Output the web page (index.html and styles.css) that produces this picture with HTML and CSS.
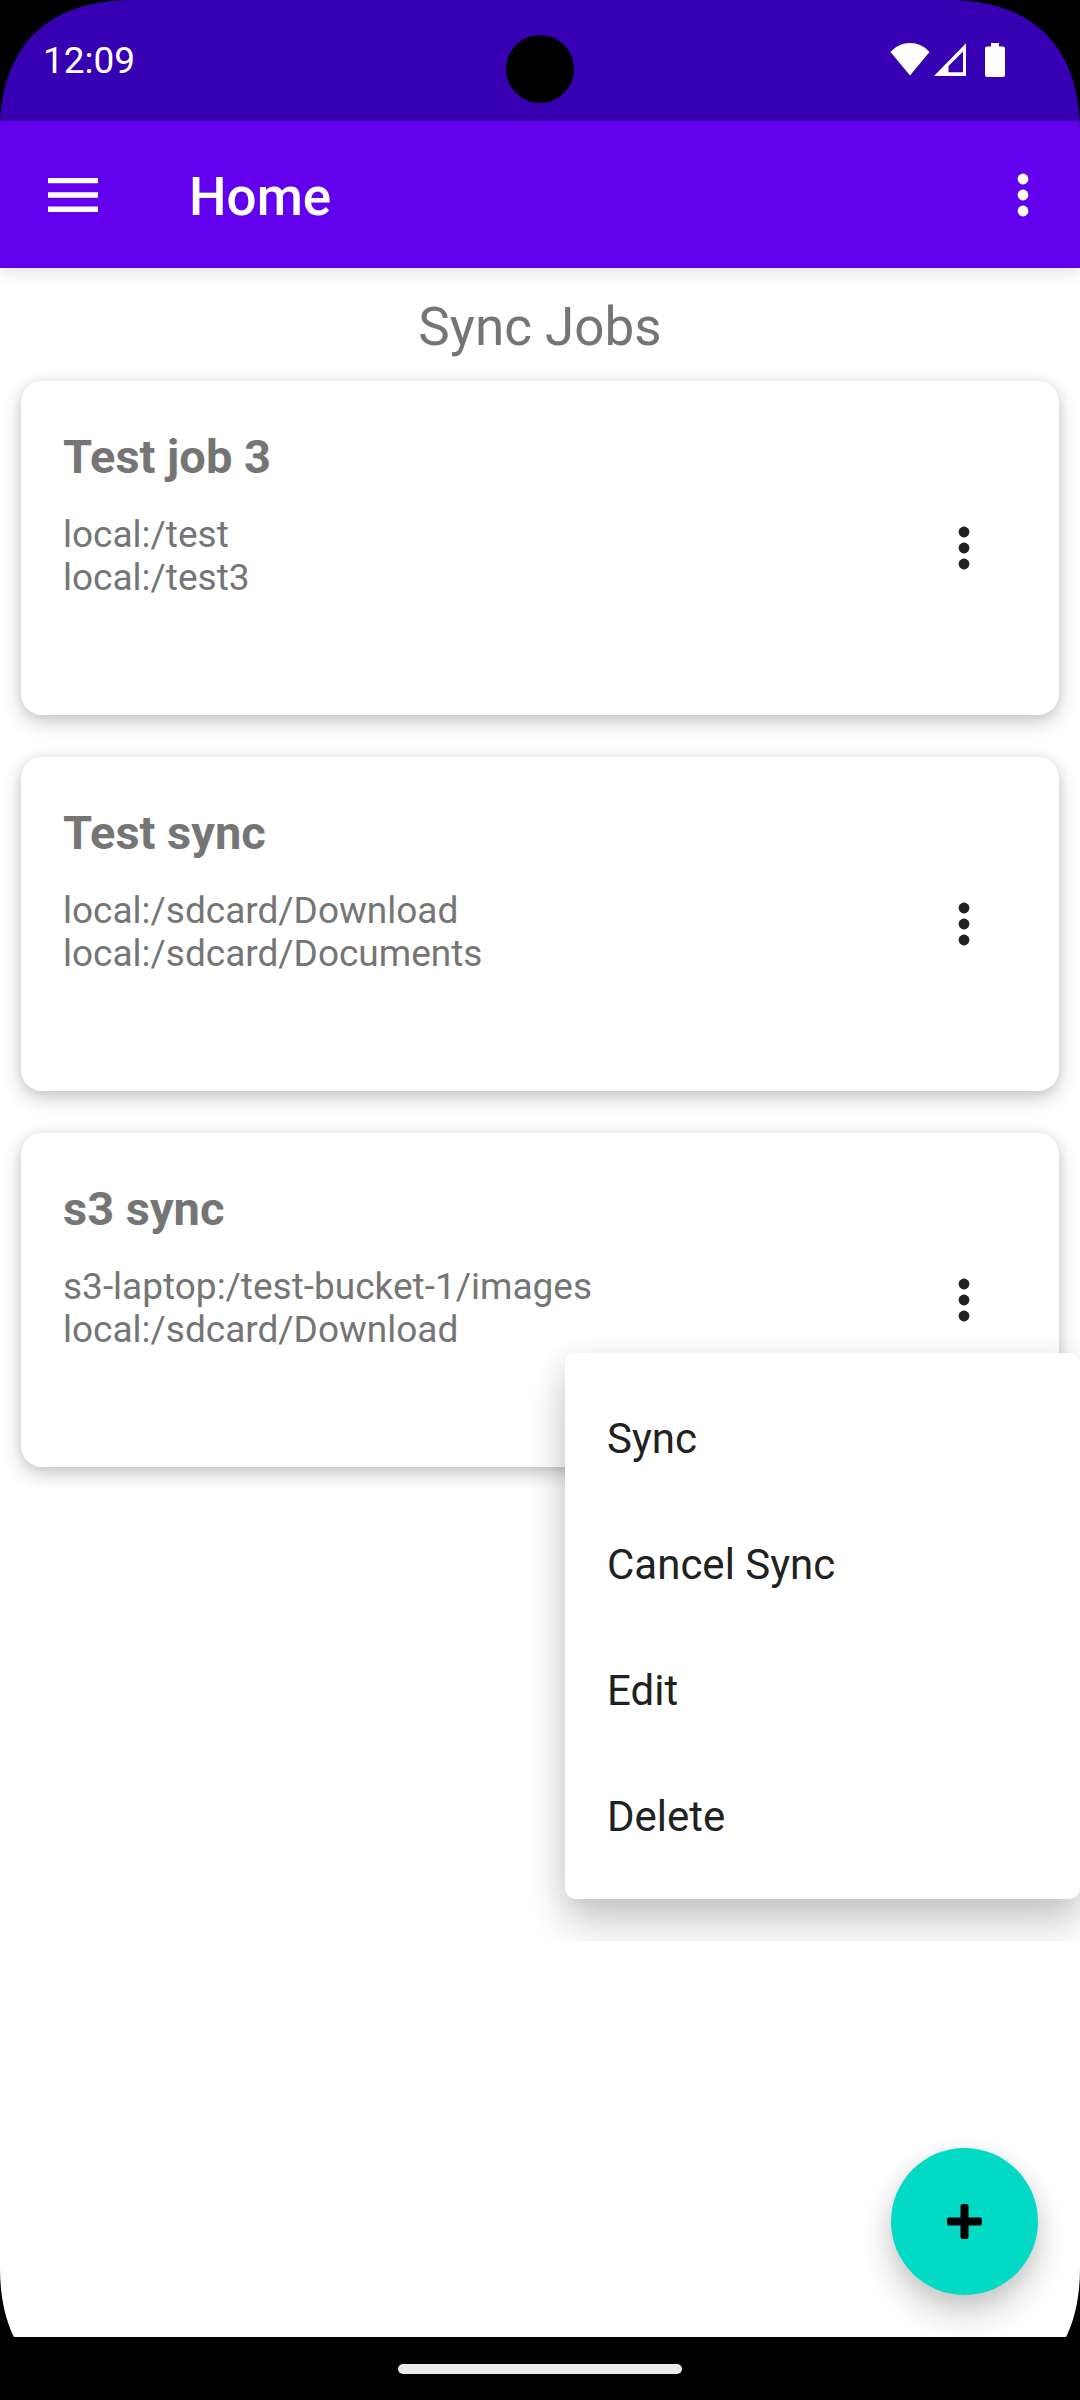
FILE: index.html
```html
<!DOCTYPE html>
<html lang="en">
<head>
<meta charset="utf-8">
<meta name="viewport" content="width=device-width">
<title>Home</title>
<link rel="stylesheet" href="styles.css">
</head>
<body>
<svg width="0" height="0" hidden>
  <symbol id="dots" viewBox="0 0 12 44"><circle cx="6" cy="6" r="5.4"/><circle cx="6" cy="22" r="5.4"/><circle cx="6" cy="38" r="5.4"/></symbol>
  <symbol id="corner" viewBox="0 0 132 132"><path d="M0 0H132C47 0 0 47 0 132Z"/></symbol>
</svg>
<div class="status">
  <span>12:09</span>
  <div class="status-icons">
    <svg width="40" height="34" viewBox="0 0 40 34"><path d="M20 32.500L.5 9C6 3 12.500 0 20 0S34 3 39.500 9Z"/></svg>
    <svg width="32" height="34" viewBox="0 0 32 34"><path fill-rule="evenodd" d="M32 .2V33H0ZM29 8.500L14.500 23V29.300H29Z"/></svg>
    <svg class="battery" width="20" height="34" viewBox="0 0 20 34"><path d="M6 0H14V3.500H18Q20 3.500 20 5.500V32Q20 34 18 34H2Q0 34 0 32V5.500Q0 3.500 2 3.500H6Z"/></svg>
  </div>
</div>
<header class="appbar">
  <button class="icon-button" aria-label="Open navigation"><svg width="50" height="34" viewBox="0 0 50 34"><path d="M0 0H50V5.300H0ZM0 14.300H50V19.700H0ZM0 28.500H50V34H0Z"/></svg></button>
  <h1>Home</h1>
  <button class="icon-button" aria-label="More options"><svg width="12" height="44"><use href="#dots"/></svg></button>
</header>
<main>
  <h2>Sync Jobs</h2>
  <ul class="jobs">
    <li class="job">
      <div><h3>Test job 3</h3><p>local:/test</p><p>local:/test3</p></div>
      <button class="icon-button" aria-label="Options for Test job 3"><svg width="12" height="44"><use href="#dots"/></svg></button>
    </li>
    <li class="job">
      <div><h3>Test sync</h3><p>local:/sdcard/Download</p><p>local:/sdcard/Documents</p></div>
      <button class="icon-button" aria-label="Options for Test sync"><svg width="12" height="44"><use href="#dots"/></svg></button>
    </li>
    <li class="job">
      <div><h3>s3 sync</h3><p>s3-laptop:/test-bucket-1/images</p><p>local:/sdcard/Download</p></div>
      <button class="icon-button" aria-label="Options for s3 sync"><svg width="12" height="44"><use href="#dots"/></svg></button>
    </li>
  </ul>
  <div class="menu" role="menu">
    <button role="menuitem">Sync</button>
    <button role="menuitem">Cancel Sync</button>
    <button role="menuitem">Edit</button>
    <button role="menuitem">Delete</button>
  </div>
  <button class="fab" aria-label="Add sync job"><svg width="35" height="35" viewBox="0 0 35 35"><path d="M15.500 0H19.500Q21.500 0 21.500 2V13.500H33Q35 13.500 35 15.500V19.500Q35 21.500 33 21.500H21.500V33Q21.500 35 19.500 35H15.500Q13.500 35 13.500 33V21.500H2Q0 21.500 0 19.500V15.500Q0 13.500 2 13.500H13.500V2Q13.500 0 15.500 0Z"/></svg></button>
</main>
<footer class="navbar"><div class="handle"></div></footer>
<div class="camera"></div>
<svg class="corner top-left"><use href="#corner"/></svg>
<svg class="corner top-right"><use href="#corner"/></svg>
<svg class="corner bottom-left"><use href="#corner"/></svg>
<svg class="corner bottom-right"><use href="#corner"/></svg>
</body>
</html>
```
FILE: styles.css
```css
* { box-sizing: border-box; margin: 0; }
body {
  position: relative;
  display: flex;
  flex-direction: column;
  min-height: 100vh;
  background: #fff;
  color: #757575;
  font-family: Roboto, sans-serif;
}
svg { display: block; fill: currentColor; }
button { border: 0; background: none; color: inherit; font: inherit; }

.status {
  display: flex;
  justify-content: space-between;
  height: 121px;
  padding: 39px 75px 0 43px;
  background: #3700b3;
  color: #fff;
  font-size: 37px;
  line-height: 44px;
}
.status-icons { display: flex; gap: 4px; padding-top: 4px; }
.battery { margin-left: 15px; }

.appbar {
  position: relative;
  z-index: 1;
  display: flex;
  align-items: center;
  height: 147px;
  padding: 0 20px 0 10px;
  background: #6200ee;
  color: #fff;
  box-shadow: 0 4px 16px rgba(0, 0, 0, .12);
}
.appbar h1 {
  flex: 1;
  padding: 5px 0 0 53px;
  font-size: 53px;
  font-weight: 500;
  line-height: 63px;
}
.icon-button {
  display: grid;
  place-items: center;
  width: 126px;
  height: 126px;
  padding: 0;
}
.appbar .icon-button:last-child { width: 74px; }

main { position: relative; flex: 1; padding-top: 28px; }
h2 {
  font-size: 53px;
  font-weight: 400;
  line-height: 63px;
  text-align: center;
}
.jobs {
  display: flex;
  flex-direction: column;
  gap: 42px;
  padding: 22px 21px 21px;
  list-style: none;
  clip-path: inset(0);
}
.job {
  display: flex;
  align-items: center;
  justify-content: space-between;
  min-height: 334px;
  padding: 42px 32px 42px 42px;
  border-radius: 21px;
  background: #fff;
  box-shadow: 0 7px 20px rgba(0, 0, 0, .2), 0 1px 12px rgba(0, 0, 0, .08);
}
.job > div { align-self: flex-start; }
.job .icon-button { color: #212121; }
h3 {
  margin-bottom: 22px;
  font-size: 47px;
  font-weight: 700;
  line-height: 68px;
}
p { font-size: 37px; line-height: 43px; }

.menu {
  position: absolute;
  top: 1085px;
  right: 0;
  display: flex;
  flex-direction: column;
  width: 515px;
  padding: 21px 0;
  border-radius: 11px;
  background: #fff;
  color: #212121;
  box-shadow: 0 24px 40px rgba(0, 0, 0, .2), 0 4px 30px rgba(0, 0, 0, .08);
  clip-path: inset(-42px 0 -42px -42px);
}
.menu button {
  height: 126px;
  padding: 3px 42px 0;
  font-size: 42px;
  text-align: left;
}

.fab {
  position: absolute;
  right: 42px;
  bottom: 42px;
  display: grid;
  place-items: center;
  width: 147px;
  height: 147px;
  border-radius: 50%;
  background: #03dac5;
  color: #000;
  box-shadow: 0 18px 34px rgba(0, 0, 0, .2), 0 4px 20px rgba(0, 0, 0, .07);
}

.navbar {
  position: relative;
  display: flex;
  justify-content: center;
  height: 63px;
  padding-top: 27px;
  background: #000;
}
.handle { width: 284px; height: 10px; border-radius: 5px; background: #ebebeb; }

.camera {
  position: absolute;
  top: 35px;
  left: 50%;
  width: 68px;
  height: 68px;
  margin-left: -34px;
  border-radius: 50%;
  background: #000;
}
.corner { position: absolute; z-index: 2; width: 132px; height: 132px; color: #000; }
.top-left { top: 0; left: 0; }
.top-right { top: 0; right: 0; transform: rotate(90deg); }
.bottom-right { right: 0; bottom: 0; transform: rotate(180deg); }
.bottom-left { bottom: 0; left: 0; transform: rotate(270deg); }
```
